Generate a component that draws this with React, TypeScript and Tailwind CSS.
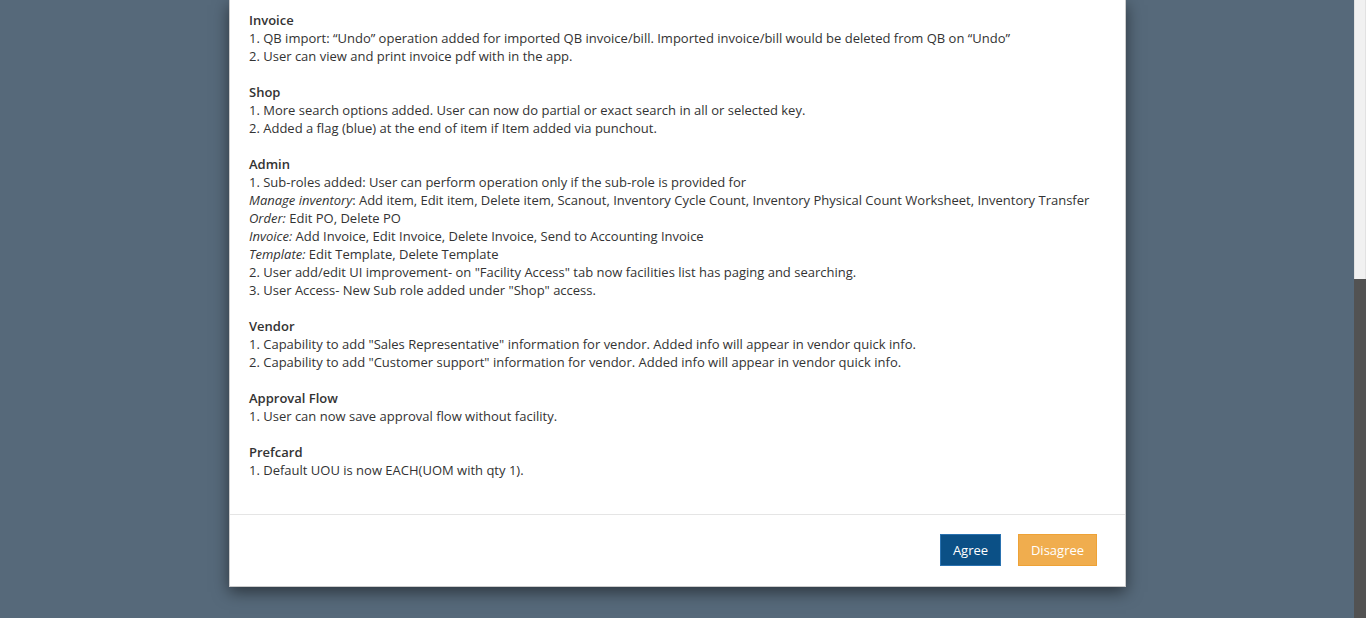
import React from 'react';

interface Section {
  title: string;
  lines: React.ReactNode[];
}

const sections: Section[] = [
  {
    title: 'Invoice',
    lines: [
      '1. QB import: \u201cUndo\u201d operation added for imported QB invoice/bill. Imported invoice/bill would be deleted from QB on \u201cUndo\u201d',
      '2. User can view and print invoice pdf with in the app.',
    ],
  },
  {
    title: 'Shop',
    lines: [
      '1. More search options added. User can now do partial or exact search in all or selected key.',
      '2. Added a flag (blue) at the end of item if Item added via punchout.',
    ],
  },
  {
    title: 'Admin',
    lines: [
      '1. Sub-roles added: User can perform operation only if the sub-role is provided for',
      <>
        <i>Manage inventory</i>: Add item, Edit item, Delete item, Scanout, Inventory Cycle Count, Inventory Physical Count Worksheet, Inventory Transfer
      </>,
      <>
        <i>Order:</i> Edit PO, Delete PO
      </>,
      <>
        <i>Invoice:</i> Add Invoice, Edit Invoice, Delete Invoice, Send to Accounting Invoice
      </>,
      <>
        <i>Template:</i> Edit Template, Delete Template
      </>,
      '2. User add/edit UI improvement- on "Facility Access" tab now facilities list has paging and searching.',
      '3. User Access- New Sub role added under "Shop" access.',
    ],
  },
  {
    title: 'Vendor',
    lines: [
      '1. Capability to add "Sales Representative" information for vendor. Added info will appear in vendor quick info.',
      '2. Capability to add "Customer support" information for vendor. Added info will appear in vendor quick info.',
    ],
  },
  {
    title: 'Approval Flow',
    lines: ['1. User can now save approval flow without facility.'],
  },
  {
    title: 'Prefcard',
    lines: ['1. Default UOU is now EACH(UOM with qty 1).'],
  },
];

export default function App() {
  return (
    <div className="flex h-[618px] w-[1366px] overflow-hidden bg-[#56697a] font-['Open_Sans',sans-serif] text-[13px] leading-[18px] text-[#333]">
      <div className="flex flex-1 justify-center pl-px">
        <div className="flex h-[587px] w-[897px] flex-col border-x border-b border-black/20 bg-white shadow-[0_5px_15px_rgba(0,0,0,0.5)]">
          {/* Release notes body */}
          <div className="flex flex-1 flex-col gap-[18px] px-[19px] pt-[11px]">
            {sections.map((s) => (
              <div key={s.title}>
                <div className="font-semibold">{s.title}</div>
                {s.lines.map((line, i) => (
                  <div key={i}>{line}</div>
                ))}
              </div>
            ))}
          </div>

          {/* Footer */}
          <div className="flex h-[72px] items-start justify-end gap-[17px] border-t border-[#e5e5e5] pr-[28px] pt-[19px]">
            <button className="h-[32px] w-[61px] border border-[#2a72b0] bg-[#0b5086] text-[13px] text-white">
              Agree
            </button>
            <button className="h-[32px] w-[79px] border border-[#eea236] bg-[#f0ad4e] text-[13px] text-white">
              Disagree
            </button>
          </div>
        </div>
      </div>

      {/* page scrollbar */}
      <div className="flex w-[12px] flex-col bg-[#525252]">
        <div className="h-[279px] border-x border-[#e2e2e2] bg-[#f1f1f1]" />
      </div>
    </div>
  );
}
